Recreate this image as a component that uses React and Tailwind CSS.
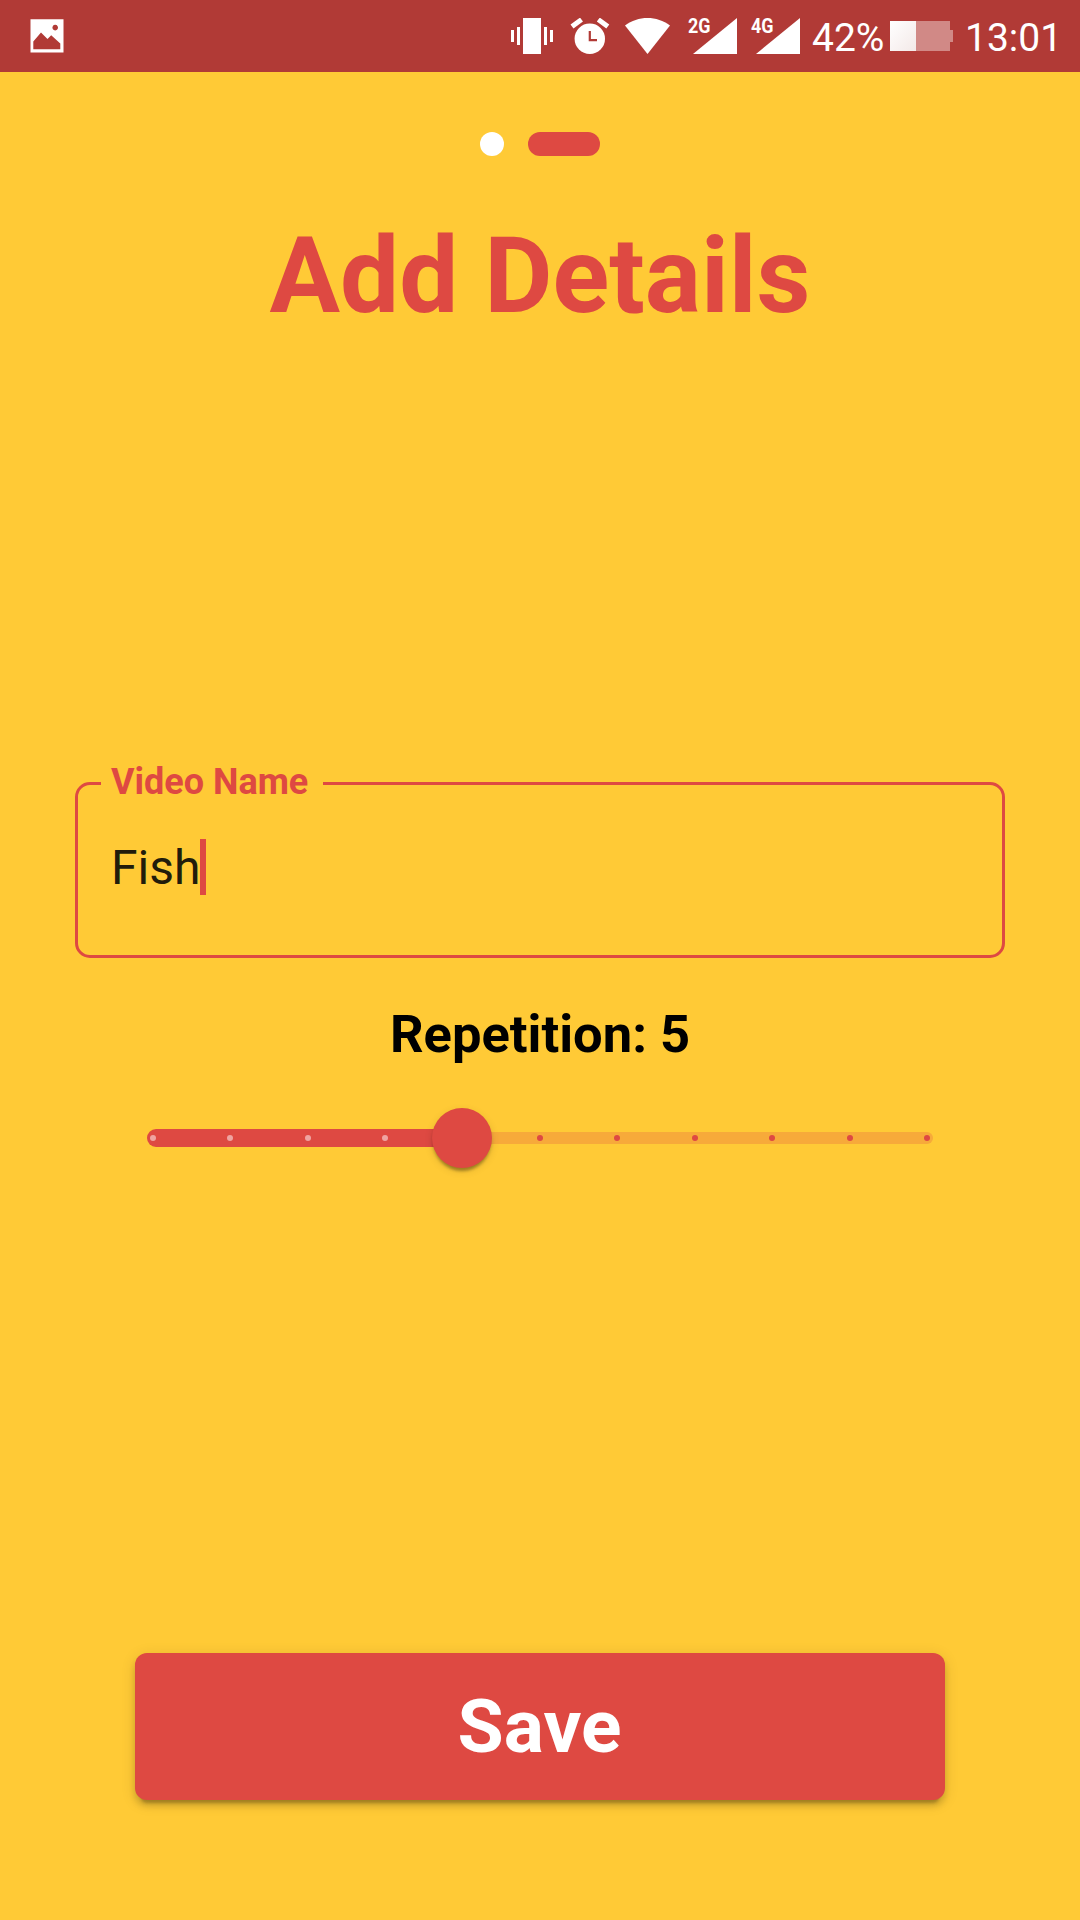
const ticks = Array.from({ length: 11 }, (_, i) => i);

function SignalIcon({ label }) {
  return (
    <svg className="h-[36px] w-[50px] shrink-0 overflow-visible" viewBox="0 0 50 36">
      <text
        x="0"
        y="15"
        fill="#fff"
        className="text-[21px] font-bold"
        textLength="22.5"
        lengthAdjust="spacingAndGlyphs"
      >
        {label}
      </text>
      <path d="M49 0V36H5z" fill="#fff" />
    </svg>
  );
}

function StatusBar() {
  return (
    <header className="flex h-[72px] items-start bg-[#b13a36] text-white">
      <svg className="mt-[19px] ml-[30px] size-[34px] shrink-0" viewBox="0 0 34 34">
        <path
          fill="#fff"
          fillRule="evenodd"
          d="M.5.3H33.5V33.5H.5zM3.3 22.5V30.3H30.3V24.5L21.2 16.2 17.5 20 11 13.5zM25.2 5.8a2.8 2.8 0 1 0 .01 0z"
        />
      </svg>
      <div className="mt-[18px] ml-[447px] flex h-[36px]">
        <svg className="h-[36px] w-[42px] shrink-0" viewBox="0 0 42 36">
          <path d="M0 12h3v12H0zM6 9h3v18H6zM12 0h18v36H12zM33 9h3v18h-3zM39 12h3v12h-3z" fill="#fff" />
        </svg>
        <svg className="ml-[17px] h-[36px] w-[40px] shrink-0" viewBox="0 0 40 36">
          <circle cx="19.8" cy="20.8" r="15.2" fill="#fff" />
          <path d="M2 8.6 11.5 1.6M28.3 1.6 37.8 8.6" stroke="#fff" strokeWidth="5" />
          <path d="M19.8 13V22.1H27" fill="none" stroke="#b13a36" strokeWidth="2.2" />
        </svg>
        <svg className="ml-[15px] h-[36px] w-[46px] shrink-0" viewBox="0 0 46 36">
          <path d="M0 7.5C13-2.5 32-2.5 45 7.5L22.5 36z" fill="#fff" />
        </svg>
        <div className="ml-[17px] flex gap-[13px]">
          <SignalIcon label="2G" />
          <SignalIcon label="4G" />
        </div>
      </div>
      <span className="mt-[15px] ml-[11px] w-[72px] text-[39px] leading-[46px]">42%</span>
      <div className="mt-[21px] ml-[6px] flex items-center">
        <span className="h-[30px] w-[26px] bg-linear-to-br from-white to-[#f3e9e8]" />
        <span className="h-[30px] w-[34px] bg-[#d18986]" />
        <span className="h-[12px] w-[3px] bg-[#d18986]" />
      </div>
      <span className="mt-[15px] ml-[12px] text-[39px] leading-[46px]">13:01</span>
    </header>
  );
}

function VideoNameField() {
  return (
    <fieldset className="mx-[75px] mt-[426px] h-[193px] rounded-[15px] border-[3px] border-[#de4942] pl-[33px]">
      <legend className="-ml-[10px] h-[36px] w-[222px] pl-[10px] text-[36px] leading-[34px] font-bold whitespace-nowrap text-[#de4942]">
        Video Name
      </legend>
      <div className="mt-[38px] flex h-[56px] items-center">
        <span className="mt-[2px] w-[89px] text-[48px] leading-[56px] text-[#211c0b]">Fish</span>
        <span className="h-[56px] w-[6px] bg-[#de4942]" />
      </div>
    </fieldset>
  );
}

function RepetitionSlider() {
  return (
    <div className="relative mx-[147px] mt-[44px] flex h-[60px] items-center">
      <span className="h-[18px] w-[315px] rounded-l-full bg-[#de4942]" />
      <span className="h-[12px] w-[471px] rounded-r-full bg-[#f7aa3a]" />
      <div className="absolute inset-x-[3px] flex justify-between">
        {ticks.map((i) => (
          <span
            key={i}
            className={i < 4 ? "size-[6px] rounded-full bg-[#efa4a1]" : "size-[6px] rounded-full bg-[#de4942]"}
          />
        ))}
      </div>
      <span className="absolute left-[284.6px] size-[60px] rounded-full bg-[#de4942] shadow-[0_6px_3px_-3px_rgba(0,0,0,0.2),0_3px_3px_0_rgba(0,0,0,0.14),0_3px_9px_0_rgba(0,0,0,0.12)]" />
    </div>
  );
}

export default function App() {
  return (
    <div className="flex h-[1920px] w-[1080px] flex-col overflow-hidden bg-[#ffca36] font-['Roboto',sans-serif]">
      <StatusBar />
      <div className="mt-[60px] flex h-[24px] justify-center gap-[24px]">
        <span className="size-[24px] rounded-full bg-white" />
        <span className="w-[72px] rounded-full bg-[#de4942]" />
      </div>
      <h1 className="mt-[59px] text-center text-[105px] leading-[124px] font-bold text-[#de4942]">Add Details</h1>
      <VideoNameField />
      <h2 className="mt-[46px] text-center text-[52.5px] leading-[60px] font-bold text-black">Repetition: 5</h2>
      <RepetitionSlider />
      <button className="mx-[135px] mt-[485px] h-[147px] shrink-0 rounded-[12px] bg-[#de4942] pr-px pb-px text-[75px] leading-[88px] font-bold text-white shadow-[0_9px_3px_-6px_rgba(0,0,0,0.2),0_6px_6px_0_rgba(0,0,0,0.14),0_3px_15px_0_rgba(0,0,0,0.12)]">
        Save
      </button>
    </div>
  );
}
